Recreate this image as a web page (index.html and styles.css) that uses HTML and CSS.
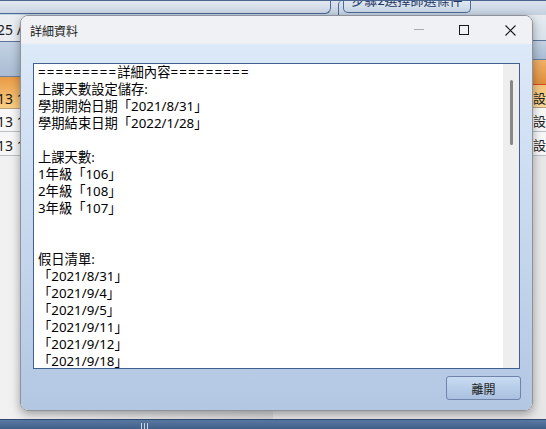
FILE: index.html
```html
<!DOCTYPE html>
<html lang="zh-Hant">
<head>
<meta charset="utf-8">
<title>詳細資料</title>
<link rel="stylesheet" href="styles.css">
</head>
<body>
<div class="app">
  <div class="tabs">
    <div class="tab-left"></div>
    <div class="step-frame">
      <div class="step-btn"><span>步驟2選擇師選條件</span></div>
    </div>
  </div>
  <div class="panes">
    <div class="pane pane-l">
      <div class="row-top"><span class="cut">25 /</span></div>
      <div class="hdr"></div>
      <div class="row-sel"><span class="cut">13 1</span></div>
      <div class="row"><span class="cut">13 1</span></div>
      <div class="row"><span class="cut">13 1</span></div>
      <div class="fill"></div>
    </div>
    <div class="pane pane-r">
      <div class="row-top r"></div>
      <div class="hdr r"></div>
      <div class="hdr-orange"></div>
      <div class="row-sel r"><span class="rt">設定</span></div>
      <div class="row r"><span class="rt">設定</span></div>
      <div class="row r"><span class="rt">設定</span></div>
      <div class="fill r"></div>
    </div>
  </div>
  <div class="bottombar"><span class="grip"></span></div>

  <div class="dialog">
    <div class="titlebar">
      <div class="title">詳細資料</div>
      <svg class="controls" width="140" height="28" viewBox="0 0 140 28">
        <line x1="22" y1="13.5" x2="32" y2="13.5" stroke="#a9abae" stroke-width="1"/>
        <rect x="67.5" y="9.5" width="9" height="9" fill="none" stroke="#1a1a1a" stroke-width="1"/>
        <path d="M113.5 9.5 L123.5 19.5 M123.5 9.5 L113.5 19.5" stroke="#1a1a1a" stroke-width="1.1" fill="none"/>
      </svg>
    </div>
    <div class="body">
      <div class="textbox">
        <div class="content"><span class="eq">=========</span>詳細內容<span class="eq">=========</span>
上課天數設定儲存:
學期開始日期「2021/8/31」
學期結束日期「2022/1/28」

上課天數:
1年級「106」
2年級「108」
3年級「107」


假日清單:
「2021/8/31」
「2021/9/4」
「2021/9/5」
「2021/9/11」
「2021/9/12」
「2021/9/18」</div>
        <div class="scroll"><div class="thumb"></div></div>
      </div>
      <div class="actions">
        <div class="btn">離開</div>
      </div>
    </div>
  </div>
</div>
</body>
</html>
```

FILE: styles.css
```css
html, body {
  margin: 0;
  padding: 0;
}

.app {
  position: relative;
  width: 546px;
  height: 429px;
  overflow: hidden;
  display: flex;
  flex-direction: column;
  font-family: "Noto Sans CJK TC", "Noto Sans", sans-serif;
  background: #e6e9ee;
}

/* ---------- background application ---------- */
.tabs {
  height: 15px;
  flex: none;
  display: flex;
  box-sizing: border-box;
  border-top: 1px solid #4a6590;
  background: linear-gradient(#dbe3ed, #c4d1e1);
}

.tab-left {
  width: 331px;
  height: 13px;
  box-sizing: border-box;
  border-right: 1px solid #4c6a96;
  border-bottom: 1px solid #4c6a96;
  border-bottom-right-radius: 6px;
  background: linear-gradient(#e1e7ef, #ccd7e5);
}

.step-frame {
  margin-left: 7px;
  width: 136px;
  height: 14px;
  box-sizing: border-box;
  border-left: 1px solid #4c6a96;
  border-top-left-radius: 4px;
  padding-left: 4px;
}

.step-btn {
  width: 128px;
  height: 12px;
  box-sizing: border-box;
  border: 1px solid #4c6a96;
  border-top: none;
  border-radius: 0 0 5px 5px;
  overflow: hidden;
  display: flex;
  justify-content: center;
  background: linear-gradient(#dfe7f1, #c9d6e7);
}

.step-btn span {
  display: block;
  margin-top: -8px;
  font-size: 13px;
  line-height: 13px;
  color: #1d3560;
  white-space: nowrap;
}

.panes {
  flex: 1;
  display: flex;
}

.pane {
  width: 273px;
  display: flex;
  flex-direction: column;
}

.cut {
  font-family: "Noto Sans", sans-serif;
  font-size: 14px;
  color: #1b1b1b;
  margin-left: -3px;
  white-space: nowrap;
}

.row-top {
  height: 27px;
  flex: none;
  box-sizing: border-box;
  border-bottom: 1px solid #5d7599;
  background: #eaeef3;
  display: flex;
  align-items: center;
  padding-top: 3px;
}

.row-top.r {
  height: 26px;
  padding-top: 0;
  background: linear-gradient(#e6ebf1, #d8e0ea);
}

.hdr {
  height: 35px;
  flex: none;
  box-sizing: border-box;
  border-bottom: 1px solid #6b7f9e;
  background: linear-gradient(#c3d1e2, #a9bcd4);
}

.hdr.r {
  height: 19px;
}

.hdr-orange {
  height: 25px;
  flex: none;
  box-sizing: border-box;
  border-bottom: 1px solid #d44a2a;
  background: linear-gradient(#f0b068, #df8e3b);
}

.row-sel {
  height: 32px;
  flex: none;
  box-sizing: border-box;
  border-bottom: 1px solid #b5a17c;
  background: linear-gradient(#e99a45, #f8cf86);
  display: flex;
  align-items: flex-end;
  padding-bottom: 0;
}

.row-sel.r {
  height: 23px;
  background: linear-gradient(#f4c27a, #fad99a);
}

.row {
  height: 24px;
  flex: none;
  box-sizing: border-box;
  border-bottom: 1px solid #b9bfc7;
  background: #f7f7f7;
  display: flex;
  align-items: center;
  padding-top: 3px;
}

.row:nth-of-type(4) {
  height: 23px;
}

.row.r {
  padding-top: 2px;
}

.rt {
  font-size: 13px;
  color: #1b1b1b;
  padding-left: 260px;
  white-space: nowrap;
}

.fill {
  flex: 1;
  background: linear-gradient(90deg, #f1f1f1, #d9d9d9);
}

.fill.r {
  background: #e7e7e7;
}

.bottombar {
  height: 9px;
  flex: none;
  border-top: 1px solid #2f4b72;
  background: linear-gradient(#5a7aa5, #3f5e88);
  display: flex;
}

.grip {
  margin-left: 141px;
  margin-top: 3px;
  width: 7px;
  height: 6px;
  background: repeating-linear-gradient(90deg, #c9d4e4 0 1px, transparent 1px 3px);
}

/* ---------- dialog ---------- */
.dialog {
  position: absolute;
  left: 20px;
  top: 15px;
  width: 513px;
  height: 396px;
  box-sizing: border-box;
  border: 1px solid #8e939b;
  border-radius: 8px;
  overflow: hidden;
  display: flex;
  flex-direction: column;
  box-shadow: 0 3px 10px rgba(0, 0, 0, 0.35);
}

.titlebar {
  height: 28px;
  flex: none;
  display: flex;
  align-items: center;
  background: #eff1f4;
}

.title {
  flex: 1;
  padding-left: 9px;
  font-size: 12px;
  color: #1a1a1a;
}

.controls {
  flex: none;
  display: block;
}

.body {
  flex: 1;
  display: flex;
  flex-direction: column;
  gap: 7px;
  padding: 19px 12px 10px 12px;
  background: linear-gradient(#dce9f8, #b3c7e3);
}

.textbox {
  height: 306px;
  flex: none;
  box-sizing: border-box;
  border: 1px solid #42608f;
  background: #ffffff;
  display: flex;
}

.content {
  flex: 1;
  padding-left: 4px;
  font-family: "Noto Sans", "Noto Sans CJK TC", sans-serif;
  font-size: 13.3px;
  line-height: 17px;
  color: #000000;
  white-space: pre;
  overflow: hidden;
}

.eq {
  letter-spacing: 1.2px;
}

.scroll {
  width: 16px;
  flex: none;
  position: relative;
  background: #eeeeee;
}

.thumb {
  position: absolute;
  left: 7px;
  top: 16px;
  width: 3px;
  height: 65px;
  border-radius: 2px;
  background: #878787;
}

.actions {
  display: flex;
  justify-content: flex-end;
  margin-right: -1px;
}

.btn {
  width: 75px;
  height: 24px;
  box-sizing: border-box;
  border: 1px solid #6f84a8;
  border-radius: 3px;
  background: linear-gradient(#c8dbf2, #a9c0df);
  font-size: 12px;
  color: #1a1a1a;
  display: flex;
  align-items: center;
  justify-content: center;
}
```
